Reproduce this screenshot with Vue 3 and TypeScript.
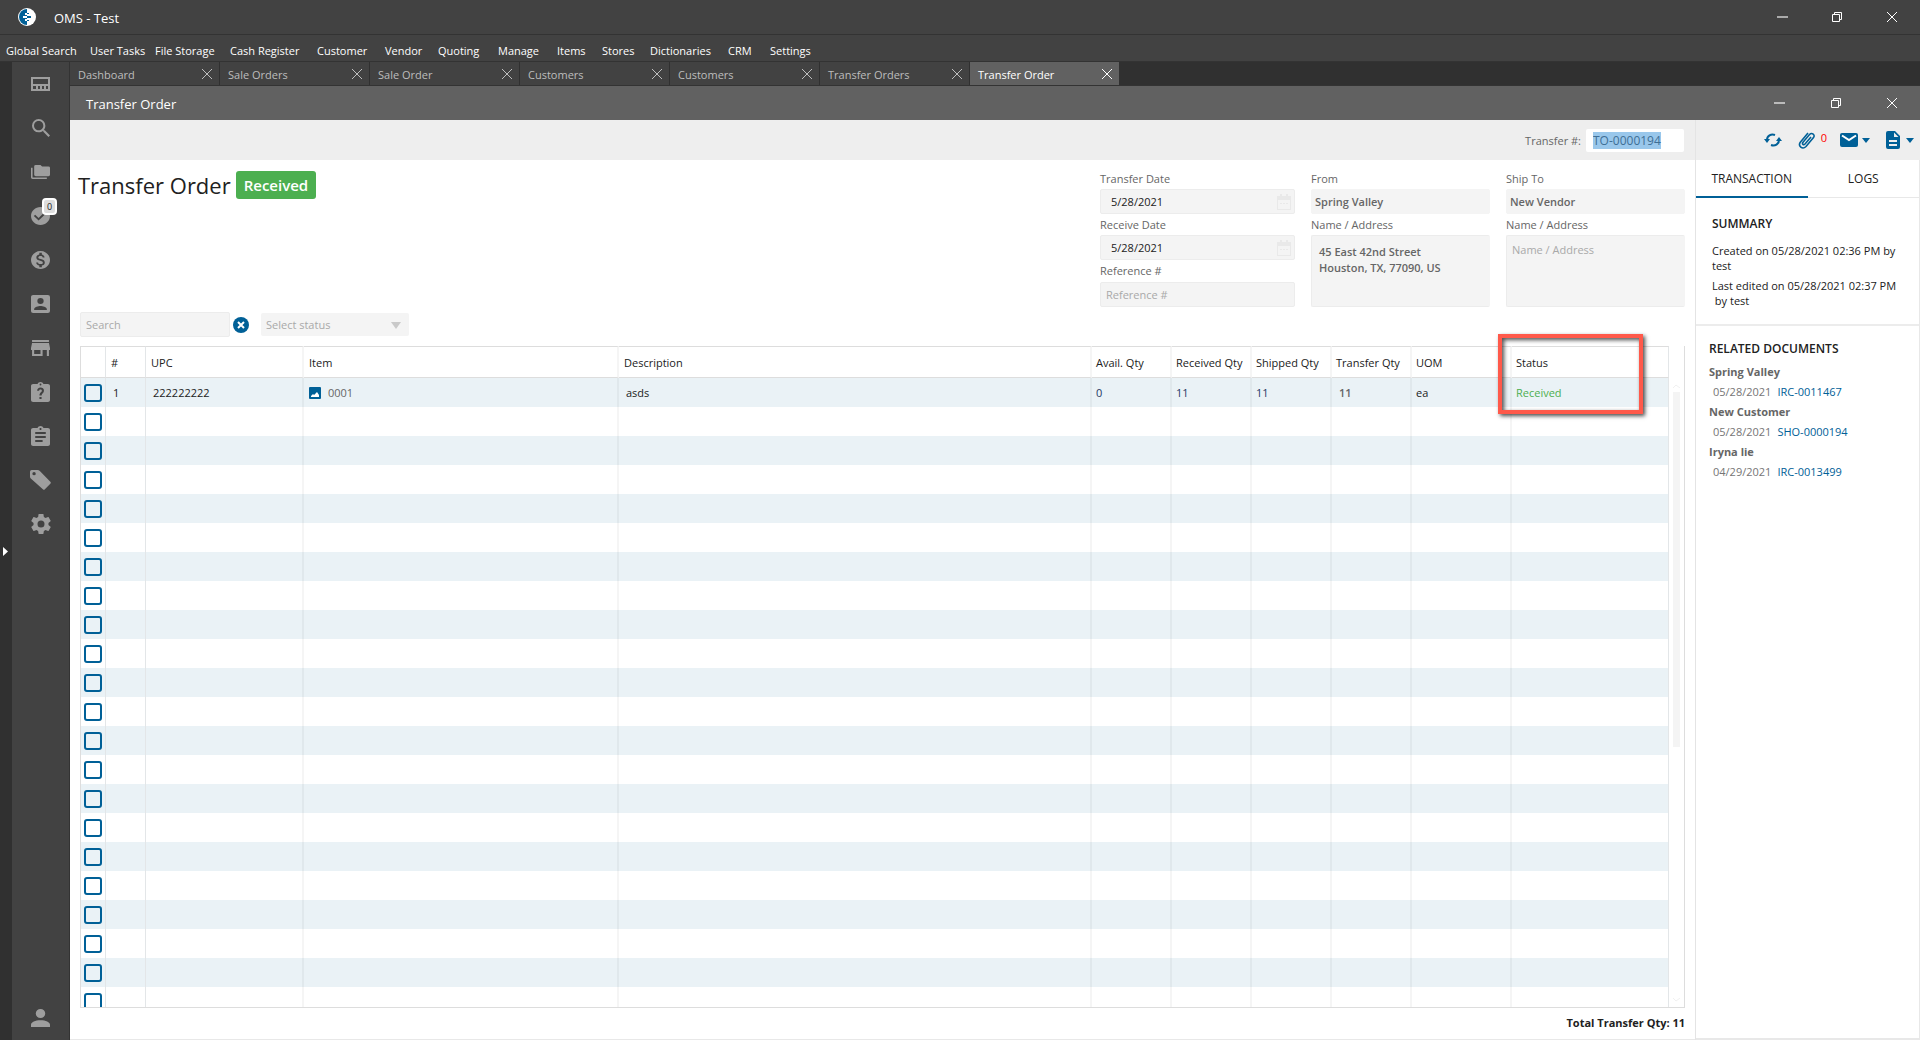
<script setup lang="ts">
import { onMounted, ref } from 'vue'

interface RailIcon { name: string; box: string; w: number; h: number; d: string; badge?: string }
interface Column { key: string; label: string }
interface Line { num: string; upc: string; item: string; description: string; avail: string; received: string; shipped: string; transfer: string; uom: string; status: string }

const menu: string[] = ['Global Search', 'User Tasks', 'File Storage', 'Cash Register', 'Customer', 'Vendor', 'Quoting', 'Manage', 'Items', 'Stores', 'Dictionaries', 'CRM', 'Settings']
const tabs: string[] = ['Dashboard', 'Sale Orders', 'Sale Order', 'Customers', 'Customers', 'Transfer Orders', 'Transfer Order']
const activeTab = ref<number>(6)

const rail: RailIcon[] = [
  { name: 'Dashboard', box: '0 0 19 14', w: 19, h: 14, d: 'M0 0H19V14H0ZM2 2V7H17V2ZM2 9V12H5V9ZM7 9V12H9V9ZM11 9V12H13V9ZM15 9V12H17V9Z' },
  { name: 'Search', box: '3 3 17.5 17.5', w: 18, h: 18, d: 'M9.5,3A6.5,6.5 0 0,1 16,9.5C16,11.11 15.41,12.59 14.44,13.73L14.71,14H15.5L20.5,19L19,20.5L14,15.5V14.71L13.73,14.44C12.59,15.41 11.11,16 9.5,16A6.5,6.5 0 0,1 3,9.5A6.5,6.5 0 0,1 9.5,3M9.5,5C7,5 5,7 5,9.5C5,12 7,14 9.5,14C12,14 14,12 14,9.5C14,7 12,5 9.5,5Z' },
  { name: 'Files', box: '0 2 24 20', w: 19, h: 14, d: 'M22,4H14L12,2H6A2,2 0 0,0 4,4V16A2,2 0 0,0 6,18H22A2,2 0 0,0 24,16V6A2,2 0 0,0 22,4M2,6H0V20A2,2 0 0,0 2,22H20V20H2V6Z' },
  { name: 'Tasks', box: '2 2 20 20', w: 19, h: 18, badge: '0', d: 'M12 2C6.5 2 2 6.5 2 12S6.5 22 12 22 22 17.5 22 12 17.5 2 12 2M10 17L5 12L6.41 10.59L10 14.17L17.59 6.58L19 8L10 17Z' },
  { name: 'Payments', box: '2 2 20 20', w: 19, h: 18, d: 'M12 2C6.48 2 2 6.48 2 12s4.48 10 10 10 10-4.48 10-10S17.52 2 12 2zm1.41 16.09V20h-2.67v-1.93c-1.71-.36-3.16-1.46-3.27-3.4h1.96c.1 1.05.82 1.87 2.65 1.87 1.96 0 2.4-.98 2.4-1.59 0-.83-.44-1.61-2.67-2.14-2.48-.6-4.18-1.62-4.18-3.67 0-1.72 1.39-2.84 3.11-3.21V4h2.67v1.95c1.86.45 2.79 1.86 2.85 3.39H14.3c-.05-1.11-.64-1.87-2.22-1.87-1.5 0-2.4.68-2.4 1.64 0 .84.65 1.39 2.67 1.91s4.18 1.39 4.18 3.91c-.01 1.83-1.38 2.83-3.12 3.16z' },
  { name: 'Contacts', box: '3 3 18 18', w: 19, h: 18, d: 'M6,17C6,15 10,13.9 12,13.9C14,13.9 18,15 18,17V18H6M15,9A3,3 0 0,1 12,12A3,3 0 0,1 9,9A3,3 0 0,1 12,6A3,3 0 0,1 15,9M3,5V19A2,2 0 0,0 5,21H19A2,2 0 0,0 21,19V5A2,2 0 0,0 19,3H5C3.89,3 3,3.9 3,5Z' },
  { name: 'Stores', box: '3 4 18 16', w: 19, h: 16, d: 'M12,18H6V14H12M21,14V12L20,7H4L3,12V14H4V20H14V14H18V20H20V14M20,4H4V6H20V4Z' },
  { name: 'Requests', box: '3 1 18 20', w: 19, h: 20, d: 'M19 3h-4.18C14.4 1.84 13.3 1 12 1c-1.3 0-2.4.84-2.82 2H5c-1.1 0-2 .9-2 2v14c0 1.1.9 2 2 2h14c1.1 0 2-.9 2-2V5c0-1.1-.9-2-2-2zM12 2.6a.9.9 0 1 1 0 1.8a.9.9 0 1 1 0-1.8zM11 16H13V18H11ZM8.8 9.8H10.7C10.7 8.9 11.2 8.4 12 8.4C12.8 8.4 13.3 8.9 13.3 9.7C13.3 11.2 11 11.4 11 14.6H13C13 12.6 15.3 12 15.3 9.7C15.3 7.8 13.9 6.6 12 6.6C10.1 6.6 8.8 7.9 8.8 9.8Z' },
  { name: 'Reports', box: '3 1 18 20', w: 19, h: 20, d: 'M19 3h-4.18C14.4 1.84 13.3 1 12 1c-1.3 0-2.4.84-2.82 2H5c-1.1 0-2 .9-2 2v14c0 1.1.9 2 2 2h14c1.1 0 2-.9 2-2V5c0-1.1-.9-2-2-2zm-7 0c.55 0 1 .45 1 1s-.45 1-1 1-1-.45-1-1 .45-1 1-1zm2 14H7v-2h7v2zm3-4H7v-2h10v2zm0-4H7V7h10v2z' },
  { name: 'Labels', box: '0 0 62 60', w: 21, h: 20, d: 'M5 0H22Q26 0 29 3L60 35Q63 38 60 41L44 58Q41 61 38 58L4 27Q0 24 0 20V5Q0 0 5 0ZM12 6A5 5 0 1 0 12 16A5 5 0 1 0 12 6Z' },
  { name: 'Settings', box: '2 2 20 20', w: 20, h: 20, d: 'M12,15.5A3.5,3.5 0 0,1 8.5,12A3.5,3.5 0 0,1 12,8.5A3.5,3.5 0 0,1 15.5,12A3.5,3.5 0 0,1 12,15.5M19.43,12.97C19.47,12.65 19.5,12.33 19.5,12C19.5,11.67 19.47,11.34 19.43,11L21.54,9.37C21.73,9.22 21.78,8.95 21.66,8.73L19.66,5.27C19.54,5.05 19.27,4.96 19.05,5.05L16.56,6.05C16.04,5.66 15.5,5.32 14.87,5.07L14.5,2.42C14.46,2.18 14.25,2 14,2H10C9.75,2 9.54,2.18 9.5,2.42L9.13,5.07C8.5,5.32 7.96,5.66 7.44,6.05L4.95,5.05C4.73,4.96 4.46,5.05 4.34,5.27L2.34,8.73C2.21,8.95 2.27,9.22 2.46,9.37L4.57,11C4.53,11.34 4.5,11.67 4.5,12C4.5,12.33 4.53,12.65 4.57,12.97L2.46,14.63C2.27,14.78 2.21,15.05 2.34,15.27L4.34,18.73C4.46,18.95 4.73,19.03 4.95,18.95L7.44,17.94C7.96,18.34 8.5,18.68 9.13,18.93L9.5,21.58C9.54,21.82 9.75,22 10,22H14C14.25,22 14.46,21.82 14.5,21.58L14.87,18.93C15.5,18.67 16.04,18.34 16.56,17.94L19.05,18.95C19.27,19.03 19.54,18.95 19.66,18.73L21.66,15.27C21.78,15.05 21.73,14.78 21.54,14.63L19.43,12.97Z' },
]

const columns: Column[] = [
  { key: 'num', label: '#' },
  { key: 'upc', label: 'UPC' },
  { key: 'item', label: 'Item' },
  { key: 'description', label: 'Description' },
  { key: 'avail', label: 'Avail. Qty' },
  { key: 'received', label: 'Received Qty' },
  { key: 'shipped', label: 'Shipped Qty' },
  { key: 'transfer', label: 'Transfer Qty' },
  { key: 'uom', label: 'UOM' },
  { key: 'status', label: 'Status' },
]
const lines: (Line | null)[] = [
  { num: '1', upc: '222222222', item: '0001', description: 'asds', avail: '0', received: '11', shipped: '11', transfer: '11', uom: 'ea', status: 'Received' },
  ...Array.from({ length: 21 }, () => null),
]
const cell = (line: Line | null, key: string): string => (line ? line[key as keyof Line] : '')

const related = [
  { name: 'Spring Valley', date: '05/28/2021', doc: 'IRC-0011467' },
  { name: 'New Customer', date: '05/28/2021', doc: 'SHO-0000194' },
  { name: 'Iryna lie', date: '04/29/2021', doc: 'IRC-0013499' },
]

const transferNo = ref<string>('TO-0000194')
const transferInput = ref<HTMLInputElement | null>(null)
onMounted(() => {
  transferInput.value?.focus()
  transferInput.value?.select()
})
</script>

<template>
  <div class="app">
    <header class="titlebar">
      <svg class="logo" viewBox="0 0 18 18" width="18" height="18">
        <circle cx="9" cy="9" r="9" fill="#fff" />
        <path d="M9 1A8 8 0 0 0 9 17Z" fill="#006097" />
        <path d="M7 5H9V7H7ZM5 8H9V10H5ZM7 11H9V13H7Z" fill="#fff" />
        <path d="M9 5H11V6H9ZM9 8H13V10H9ZM9 12H11V13H9Z" fill="#006097" />
      </svg>
      <span class="app-name">OMS - Test</span>
      <div class="win-controls">
        <button aria-label="Minimize"><svg width="12" height="12"><path d="M1 6H12" stroke="#aaa" stroke-width="2" /></svg></button>
        <button aria-label="Restore"><svg width="12" height="12"><path d="M1.500 3.500H8.500V10.500H1.500ZM3.500 3V1.500H10.500V8.500H9" fill="none" stroke="#fff" /></svg></button>
        <button aria-label="Close"><svg width="12" height="12"><path d="M1 1L11 11M11 1L1 11" stroke="#fff" /></svg></button>
      </div>
    </header>
    <nav class="menu">
      <a v-for="m in menu" :key="m" href="#">{{ m }}</a>
    </nav>

    <div class="body">
      <button class="handle" aria-label="Expand"><svg width="5" height="9"><path d="M0 0L5 4.500L0 9Z" fill="#fff" /></svg></button>
      <aside class="rail">
        <button v-for="i in rail" :key="i.name" :aria-label="i.name">
          <svg :viewBox="i.box" :width="i.w" :height="i.h" preserveAspectRatio="none"><path :d="i.d" fill="#9e9e9e" fill-rule="evenodd" /></svg>
          <span v-if="i.badge" class="badge">{{ i.badge }}</span>
        </button>
        <button class="user" aria-label="Account">
          <svg viewBox="4 4 16 16" width="19" height="18" preserveAspectRatio="none"><path d="M12,4A4,4 0 0,1 16,8A4,4 0 0,1 12,12A4,4 0 0,1 8,8A4,4 0 0,1 12,4M12,14C16.420,14 20,15.790 20,18V20H4V18C4,15.790 7.580,14 12,14Z" fill="#9e9e9e" /></svg>
        </button>
      </aside>

      <div class="work">
        <div class="tabs">
          <div v-for="(t, i) in tabs" :key="i" class="tab" :class="{ active: i === activeTab }">
            <button class="tab-name" @click="activeTab = i">{{ t }}</button>
            <button class="tab-close" aria-label="Close tab"><svg width="10" height="10"><path d="M0 0L10 10M10 0L0 10" stroke="currentColor" /></svg></button>
          </div>
        </div>
        <div class="docbar">
          <span>Transfer Order</span>
          <div class="win-controls">
            <button aria-label="Minimize"><svg width="12" height="12"><path d="M1 6H12" stroke="#bbb" stroke-width="2" /></svg></button>
            <button aria-label="Restore"><svg width="12" height="12"><path d="M1.500 3.500H8.500V10.500H1.500ZM3.500 3V1.500H10.500V8.500H9" fill="none" stroke="#fff" /></svg></button>
            <button aria-label="Close"><svg width="12" height="12"><path d="M1 1L11 11M11 1L1 11" stroke="#fff" /></svg></button>
          </div>
        </div>

        <div class="panes">
          <main class="main">
            <div class="toolbar">
              <label for="transfer-no">Transfer #:</label>
              <input id="transfer-no" ref="transferInput" v-model="transferNo" type="text" />
            </div>

            <div class="head">
              <div class="headline">
                <h1>Transfer Order</h1>
                <span class="pill">Received</span>
              </div>
              <div class="form">
                <div class="col dates">
                  <label for="tdate">Transfer Date</label>
                  <div class="date">
                    <input id="tdate" type="text" value="5/28/2021" readonly />
                    <svg width="14" height="16"><path d="M0 2H14V16H0ZM1 6V15H13V6ZM3 0H5V2H3ZM9 0H11V2H9ZM3 9H5V10H3ZM6 9H8V10H6ZM9 9H11V10H9Z" fill="#e9e9e9" fill-rule="evenodd" /></svg>
                  </div>
                  <label for="rdate">Receive Date</label>
                  <div class="date">
                    <input id="rdate" type="text" value="5/28/2021" readonly />
                    <svg width="14" height="16"><path d="M0 2H14V16H0ZM1 6V15H13V6ZM3 0H5V2H3ZM9 0H11V2H9ZM3 9H5V10H3ZM6 9H8V10H6ZM9 9H11V10H9Z" fill="#e9e9e9" fill-rule="evenodd" /></svg>
                  </div>
                  <label for="refno">Reference #</label>
                  <input id="refno" class="box" type="text" placeholder="Reference #" readonly />
                </div>
                <div class="col">
                  <label for="from">From</label>
                  <input id="from" class="box strong" type="text" value="Spring Valley" readonly />
                  <label for="from-addr">Name / Address</label>
                  <textarea id="from-addr" class="box strong" readonly>45 East 42nd Street
Houston, TX, 77090, US</textarea>
                </div>
                <div class="col">
                  <label for="shipto">Ship To</label>
                  <input id="shipto" class="box strong" type="text" value="New Vendor" readonly />
                  <label for="ship-addr">Name / Address</label>
                  <textarea id="ship-addr" class="box empty" placeholder="Name / Address" readonly></textarea>
                </div>
              </div>
            </div>

            <div class="filters">
              <input class="box search" type="text" placeholder="Search" aria-label="Search" />
              <button class="clear" aria-label="Clear search"><svg width="16" height="16"><circle cx="8" cy="8" r="8" fill="#006097" /><path d="M5 5L11 11M11 5L5 11" stroke="#fff" stroke-width="2" /></svg></button>
              <div class="select">
                <select aria-label="Status"><option>Select status</option></select>
                <svg width="10" height="7"><path d="M0 0H10L5 7Z" fill="#c9c9c9" /></svg>
              </div>
            </div>

            <div class="grid-area">
              <div class="grid">
                <div class="table-clip">
                  <table>
                    <colgroup>
                      <col class="c-check" /><col class="c-num" /><col class="c-upc" /><col class="c-item" /><col /><col class="c-qty" /><col class="c-qty" /><col class="c-qty" /><col class="c-qty" /><col class="c-uom" /><col class="c-status" />
                    </colgroup>
                    <thead>
                      <tr>
                        <th></th>
                        <th v-for="c in columns" :key="c.key">{{ c.label }}</th>
                      </tr>
                    </thead>
                    <tbody>
                      <tr v-for="(l, i) in lines" :key="i">
                        <td class="check"><input type="checkbox" :aria-label="`Select line ${i + 1}`" /></td>
                        <td v-for="c in columns" :key="c.key" :class="c.key">
                          <span v-if="l && c.key === 'item'" class="with-icon">
                            <svg width="12" height="12"><rect width="12" height="12" rx="1" fill="#006097" /><path d="M2 10V9L4 7L5 8L8 5L10 8V10Z" fill="#fff" /></svg>{{ l.item }}
                          </span>
                          <template v-else>{{ cell(l, c.key) }}</template>
                        </td>
                      </tr>
                    </tbody>
                  </table>
                </div>
                <div class="scroll">
                  <svg width="7" height="4"><path d="M0 4L3 1L7 4" fill="none" stroke="#f0f0f0" /></svg>
                  <div class="track"><div class="thumb"></div></div>
                  <svg width="7" height="4"><path d="M0 0L3 3L7 0" fill="none" stroke="#f0f0f0" /></svg>
                </div>
              </div>
              <div class="highlight"></div>
            </div>
            <div class="total">Total Transfer Qty: 11</div>
          </main>

          <aside class="side">
            <div class="actions">
              <button aria-label="Refresh">
                <svg width="18" height="16" fill="none" stroke="#006097" stroke-width="2"><path d="M3 8C3 4 7 1.500 11 3M15 8C15 12 11 14.500 7 13" /><path d="M0 7H6L3 11ZM12 9H18L15 5Z" fill="#006097" stroke="none" /></svg>
              </button>
              <button class="attach" aria-label="Attachments">
                <svg width="18" height="20" viewBox="0 0 18 20" fill="none" stroke="#006097" stroke-width="1.600"><path d="M13 7L7 14C5.500 15.500 3.500 14 5 12.200L11.500 4.500C14 2 17.500 5 15.500 7.500L8 16.500C4.500 20 -0.500 16 2.500 12L10 3" /></svg>
                <span class="count">0</span>
              </button>
              <button class="mail" aria-label="Email">
                <svg width="18" height="14"><rect width="18" height="14" rx="2" fill="#006097" /><path d="M2 2.500L9 7L16 2.500" fill="none" stroke="#fff" stroke-width="2" /></svg>
                <svg width="8" height="5"><path d="M0 0H8L4 5Z" fill="#006097" /></svg>
              </button>
              <button class="docs" aria-label="Documents">
                <svg width="14" height="18"><path d="M2 0H9L14 5V16Q14 18 12 18H2Q0 18 0 16V2Q0 0 2 0ZM8 1.500V6H12.500ZM3 9V11H11V9ZM3 13V15H11V13Z" fill="#006097" fill-rule="evenodd" /></svg>
                <svg width="8" height="5"><path d="M0 0H8L4 5Z" fill="#006097" /></svg>
              </button>
            </div>
            <div class="side-body">
              <div class="side-tabs">
                <button class="on">TRANSACTION</button>
                <button>LOGS</button>
              </div>
              <section class="summary">
                <h2>SUMMARY</h2>
                <p>Created on 05/28/2021 02:36 PM by<br />test</p>
                <p>Last edited on 05/28/2021 02:37 PM<br />&nbsp;by test</p>
              </section>
              <section class="related">
                <h2>RELATED DOCUMENTS</h2>
                <div v-for="r in related" :key="r.doc" class="rel">
                  <h3>{{ r.name }}</h3>
                  <div class="doc"><span>{{ r.date }}</span><a href="#">{{ r.doc }}</a></div>
                </div>
              </section>
            </div>
          </aside>
        </div>
      </div>
    </div>
  </div>
</template>

<style>
body {
  margin: 0;
}
</style>

<style scoped>
* {
  box-sizing: border-box;
}
.app {
  display: flex;
  flex-direction: column;
  height: 100vh;
  overflow: hidden;
  font-family: 'Open Sans', 'Noto Sans', sans-serif;
  font-size: 11px;
  line-height: 15px;
  color: #212121;
  background: #303030;
}
button {
  display: flex;
  align-items: center;
  padding: 0;
  border: 0;
  background: none;
  font: inherit;
  color: inherit;
}
input,
textarea,
select {
  font: inherit;
  color: inherit;
}
a {
  text-decoration: none;
}
svg {
  display: block;
  flex: none;
}
.titlebar {
  display: flex;
  align-items: center;
  height: 35px;
  padding-left: 18px;
  background: #424242;
  border-bottom: 1px solid #333;
  color: #fff;
}
.app-name {
  margin-left: 18px;
  padding-top: 2px;
  font-size: 13px;
}
.win-controls {
  display: flex;
  margin-left: auto;
  padding-right: 1px;
}
.win-controls button {
  justify-content: center;
  width: 55px;
  height: 34px;
}
.menu {
  display: grid;
  grid-template-columns: 84px 65px 75px 87px 68px 53px 60px 59px 45px 48px 78px 42px 60px;
  align-items: center;
  height: 27px;
  padding: 5px 6px 0;
  background: #424242;
  border-bottom: 1px solid #333;
}
.menu a {
  color: #fff;
  white-space: nowrap;
}
.body {
  display: flex;
  flex: 1;
  min-height: 0;
}
.handle {
  width: 12px;
  padding-left: 3px;
}
.rail {
  display: flex;
  flex-direction: column;
  width: 58px;
  background: #424242;
  border-right: 1px solid #333;
}
.rail button {
  position: relative;
  justify-content: center;
  height: 44px;
}
.rail .user {
  margin-top: auto;
}
.badge {
  position: absolute;
  top: 4px;
  left: 30px;
  width: 15px;
  height: 17px;
  border: 2px solid #fff;
  border-radius: 4px;
  background: #ddd;
  color: #212121;
  font-size: 9px;
  line-height: 13px;
}
.work {
  display: flex;
  flex: 1;
  flex-direction: column;
  min-width: 0;
}
.tabs {
  display: flex;
  height: 24px;
  border-bottom: 1px solid #333;
}
.tab {
  display: flex;
  align-items: center;
  justify-content: space-between;
  width: 150px;
  padding: 1px 7px 0 8px;
  background: #424242;
  border-right: 1px solid #303030;
  color: #bdbdbd;
}
.tab.active {
  background: #616161;
  color: #fff;
}
.docbar {
  display: flex;
  align-items: center;
  height: 34px;
  padding-left: 16px;
  background: #616161;
  color: #fff;
  font-size: 13px;
}
.docbar > span {
  padding-top: 2px;
}
.docbar .win-controls button {
  width: 57px;
}
.docbar .win-controls button:last-child {
  width: 55px;
}
.panes {
  display: flex;
  flex: 1;
  min-height: 0;
}
.main {
  display: flex;
  flex: 1;
  flex-direction: column;
  min-width: 0;
  background: #fff;
  border-bottom: 1px solid #e8e8e8;
}
.toolbar {
  display: flex;
  align-items: center;
  justify-content: flex-end;
  gap: 5px;
  flex: none;
  height: 40px;
  padding: 1px 11px 0 0;
  background: #eee;
}
.toolbar label {
  color: #666;
}
.toolbar input {
  width: 98px;
  height: 23px;
  padding: 0 7px 1px;
  border: 0;
  border-radius: 2px;
  outline: 0;
  background: #fff;
  color: #555;
  font-size: 12px;
}
.toolbar input::selection {
  background: #99c7eb;
  color: #3f6f96;
}
.head {
  display: flex;
  justify-content: space-between;
  padding: 11px 10px 0 8px;
}
.headline {
  display: flex;
  align-items: flex-start;
  gap: 5px;
}
h1 {
  margin: 0;
  font-size: 22px;
  line-height: 28px;
  font-weight: 400;
}
.pill {
  padding: 0 8px;
  border-radius: 3px;
  background: #4caf50;
  color: #fff;
  font-size: 15px;
  line-height: 28px;
  font-weight: 600;
}
.form {
  display: flex;
  gap: 16px;
}
.col {
  display: flex;
  flex-direction: column;
  width: 179px;
}
.dates {
  width: 195px;
}
.col label {
  height: 21px;
  padding-top: 4px;
  line-height: 14px;
  color: #666;
}
.col label:first-child {
  height: 18px;
  padding-top: 1px;
}
.col label:nth-of-type(3) {
  height: 22px;
}
.box,
.date {
  height: 25px;
  padding: 0 5px;
  border: 1px solid #ececec;
  border-radius: 2px;
  outline: 0;
  background: #f4f4f4;
}
.date {
  display: flex;
  align-items: center;
  padding: 0 3px 0 10px;
}
.date input {
  flex: 1;
  min-width: 0;
  padding: 0;
  border: 0;
  outline: 0;
  background: none;
}
.strong {
  border-color: #f4f4f4;
  padding-left: 3px;
  color: #666;
  font-weight: 600;
}
textarea.box {
  height: 72px;
  margin: 0;
  padding: 8px 7px;
  border-color: #ececec;
  border-right-color: #f4f4f4;
  line-height: 16px;
  resize: none;
  overflow: hidden;
}
textarea.empty {
  padding: 6px 5px;
}
::placeholder {
  color: #a9a9a9;
  opacity: 1;
}
.filters {
  display: flex;
  align-items: center;
  padding: 5px 10px 9px;
}
.search {
  width: 150px;
}
.clear {
  margin: 0 12px 0 3px;
}
.select {
  position: relative;
}
.select select {
  display: block;
  width: 148px;
  height: 23px;
  padding: 0 5px;
  border: 0;
  border-radius: 2px;
  appearance: none;
  background: #f4f4f4;
  color: #a9a9a9;
}
.select svg {
  position: absolute;
  top: 9px;
  right: 8px;
}
.grid-area {
  position: relative;
  display: flex;
  flex: 1;
  min-height: 0;
  padding: 0 10px;
}
.grid {
  display: flex;
  flex: 1;
  min-width: 0;
  border: 1px solid #ddd;
  border-top: 0;
}
.table-clip {
  flex: 1;
  min-width: 0;
  overflow: hidden;
}
table {
  width: 100%;
  table-layout: fixed;
  border-collapse: separate;
  border-spacing: 0;
}
.c-check { width: 25px; }
.c-num { width: 40px; }
.c-upc { width: 158px; }
.c-item { width: 315px; }
.c-qty { width: 80px; }
.c-uom { width: 100px; }
.c-status { width: 157px; }
th {
  height: 32px;
  padding: 0 0 0 5px;
  border-top: 1px solid #ddd;
  border-bottom: 1px solid #ddd;
  border-right: 1px solid #e3e6e8;
  text-align: left;
  font-weight: 400;
  white-space: nowrap;
}
td {
  height: 29px;
  padding: 0 0 0 5px;
  border-right: 1px solid #e3e6e8;
}
th:nth-child(n + 3):not(:last-child),
td:nth-child(n + 3):not(:last-child) {
  border-right: 2px solid rgba(0, 0, 0, 0.04);
}
th:nth-child(n + 6),
td:nth-child(n + 6) {
  padding-left: 4px;
}
tbody tr:nth-child(odd) td {
  background: #eaf2f6;
}
td.check {
  padding: 1px 0 0 3px;
}
td.check input {
  display: block;
  width: 18px;
  height: 18px;
  margin: 0;
  border: 2px solid #006097;
  border-radius: 3px;
  appearance: none;
}
td.num,
td.upc,
td.description {
  padding-left: 7px;
}
.with-icon {
  display: flex;
  align-items: center;
  gap: 7px;
  color: #666;
}
td.avail,
td.received,
td.shipped {
  color: #1f3864;
}
td.transfer {
  padding-left: 7px;
  color: #666;
  font-weight: 600;
}
td.status {
  color: #4caf50;
}
.scroll {
  display: flex;
  flex-direction: column;
  align-items: center;
  gap: 4px;
  width: 15px;
  padding: 38px 0 5px;
}
.track {
  flex: 1;
}
.thumb {
  width: 7px;
  height: 59%;
  background: #f4f4f4;
}
.highlight {
  position: absolute;
  top: -12px;
  right: 52px;
  width: 145px;
  height: 80px;
  border: 4px solid #ff594a;
  box-shadow: 2px 2px 4px rgba(0, 0, 0, 0.7), inset 2px 2px 4px rgba(0, 0, 0, 0.7);
}
.total {
  padding: 7px 10px 9px;
  text-align: right;
  font-weight: 700;
}
.side {
  display: flex;
  flex-direction: column;
  width: 225px;
  border-left: 1px solid #e4e4e4;
  background: #fff;
}
.actions {
  display: flex;
  align-items: center;
  justify-content: flex-end;
  height: 40px;
  padding-right: 6px;
  background: #eee;
}
.actions button {
  gap: 4px;
  margin-left: 16px;
}
.actions .attach {
  gap: 5px;
}
.actions .mail {
  margin-left: 13px;
}
.actions .docs {
  gap: 6px;
}
.count {
  align-self: flex-start;
  color: #f00;
}
.side-body {
  flex: 1;
  border-right: 1px solid #e8e8e8;
  border-bottom: 2px solid #e8e8e8;
}
.side-tabs {
  display: flex;
  height: 38px;
  border-bottom: 1px solid #e8e8e8;
}
.side-tabs button {
  flex: 1;
  justify-content: center;
  height: 38px;
  border-bottom: 2px solid transparent;
  font-size: 12px;
}
.side-tabs .on {
  border-color: #006097;
}
.summary {
  padding: 18px 0 16px 16px;
  border-bottom: 2px solid #ececec;
  white-space: nowrap;
}
h2 {
  margin: 0;
  font-size: 12px;
  line-height: 16px;
  font-weight: 600;
}
.summary p {
  margin: 5px 0 0;
}
.summary h2 + p {
  margin-top: 11px;
}
.related {
  padding: 15px 0 0 13px;
}
.related h2 {
  margin-bottom: 5px;
}
.rel {
  height: 40px;
}
h3 {
  margin: 0;
  font-size: 11px;
  line-height: 20px;
  font-weight: 700;
  color: #666;
}
.doc {
  display: flex;
  gap: 6px;
  padding-left: 4px;
  line-height: 20px;
  color: #757575;
}
.doc a {
  color: #006097;
}
</style>
